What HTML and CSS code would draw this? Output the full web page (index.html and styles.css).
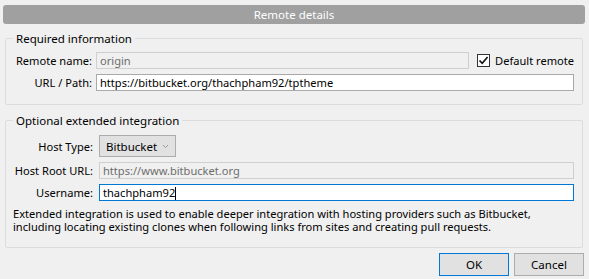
FILE: index.html
```html
<!DOCTYPE html>
<html lang="en">
<head>
    <meta charset="UTF-8">
    <meta name="viewport" content="width=device-width, initial-scale=1.0">
    <title>Remote details</title>
    <link rel="stylesheet" href="styles.css">
</head>
<body>
    <div class="titlebar">Remote details</div>

    <fieldset class="group">
        <legend>Required information</legend>
        <div class="row">
            <label class="lbl">Remote name:</label>
            <input class="field disabled" type="text" value="origin" readonly>
            <label class="check">
                <span class="box">
                    <svg width="11" height="11" viewBox="0 0 11 11"><path d="M1.5 5.5 L4.2 8.3 L9.6 2" fill="none" stroke="#111" stroke-width="1.6"/></svg>
                </span>
                Default remote
            </label>
        </div>
        <div class="row">
            <label class="lbl">URL / Path:</label>
            <input class="field" type="text" value="https://bitbucket.org/thachpham92/tptheme">
        </div>
    </fieldset>

    <fieldset class="group group2">
        <legend>Optional extended integration</legend>
        <div class="row">
            <label class="lbl">Host Type:</label>
            <div class="select">Bitbucket
                <svg width="7" height="5" viewBox="0 0 7 5"><path d="M1 1 L3.5 3.5 L6 1" fill="none" stroke="#999" stroke-width="1"/></svg>
            </div>
        </div>
        <div class="row">
            <label class="lbl">Host Root URL:</label>
            <input class="field disabled" type="text" value="https://www.bitbucket.org" readonly>
        </div>
        <div class="row">
            <label class="lbl">Username:</label>
            <div class="field focused">thachpham92<span class="caret"></span></div>
        </div>
        <p class="note">Extended integration is used to enable deeper integration with hosting providers such as Bitbucket, including locating existing clones when following links from sites and creating pull requests.</p>
    </fieldset>

    <div class="buttons">
        <button class="btn default">OK</button>
        <button class="btn">Cancel</button>
    </div>
</body>
</html>
```

FILE: styles.css
```css
body { margin: 0; padding: 5px 4px 0 3px; background: #f0f0f0; font-family: "Segoe UI", "Noto Sans", sans-serif; font-size: 11.1px; color: #000; }
.titlebar { height: 19px; line-height: 19px; background: #a0a0a0; color: #fff; text-align: center; border-radius: 3px; font-size: 11.5px; }

.group { margin: 7px 2px 0 2px; padding: 6px 8px 13px 8px; border: 1px solid #dcdcdc; border-radius: 2px; }
.group legend { padding: 0 3px; margin-left: -1px; line-height: 15px; font-size: 11.5px; }
.group2 { margin-top: 8px; padding-top: 7px; padding-bottom: 14px; }

.row { display: flex; align-items: center; }
.row + .row { margin-top: 5px; }
.lbl { box-sizing: border-box; width: 82px; text-align: right; padding-right: 4px; flex-shrink: 0; white-space: nowrap; }
.group2 .lbl { width: 85px; padding-right: 6px; }

.field { flex: 1; min-width: 0; height: 17px; box-sizing: border-box; border: 1px solid #a9a9a9; background: #fff; font: inherit; padding: 0 3px; line-height: 15px; }
.field.disabled { background: #f0f0f0; border-color: #cfcfcf; color: #6d6d6d; }
.field.focused { border-color: #0078d7; }
.caret { display: inline-block; width: 1px; height: 13px; background: #000; vertical-align: -3px; }

.check { display: flex; align-items: center; margin-left: 8px; white-space: nowrap; }
.box { width: 13px; height: 13px; box-sizing: border-box; border: 1px solid #333; background: #fff; margin-right: 5px; display: flex; align-items: center; justify-content: center; }

.select { width: 77px; height: 22px; box-sizing: border-box; border: 1px solid #adadad; background: #e1e1e1; display: flex; align-items: center; justify-content: space-between; padding: 0 6px 0 6px; font-size: 11.5px; }

.note { margin: 6px 0 0 -1px; line-height: 13px; }

.buttons { display: flex; justify-content: flex-end; gap: 5px; margin-top: 5px; padding-right: 1px; }
.btn { width: 70px; height: 23px; border: 1px solid #adadad; background: #e1e1e1; font: inherit; font-size: 11.5px; padding: 0; }
.btn.default { border-color: #0078d7; }
```
